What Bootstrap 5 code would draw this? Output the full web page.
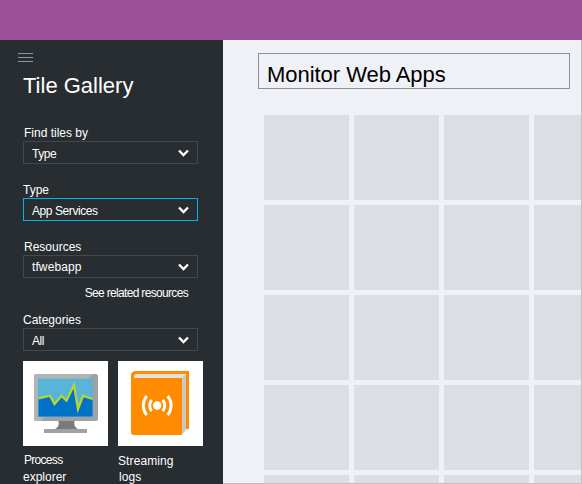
<!DOCTYPE html>
<html lang="en">
<head>
<meta charset="utf-8">
<meta name="viewport" content="width=device-width, initial-scale=1">
<title>Tile Gallery</title>
<link href="https://cdn.jsdelivr.net/npm/bootstrap@5.3.0/dist/css/bootstrap.min.css" rel="stylesheet">
<style>
body{font-family:"Liberation Sans",Arial,sans-serif;font-size:12px;line-height:16px;background:#f0f1f7}
.topbar{height:40px;background:#9b4f96}
.gallery{width:223px;background:#282d31;padding:13px 20px 0 23px}
.menu-btn{height:9px;width:15px;margin-left:-5px}
.gallery-title{font-size:22px;line-height:26px;margin:11px 0 26px}
.field{margin-bottom:18px;width:175px}
.field-label{height:16px}
.nudge{padding-left:1px}
.picker{height:23px;border:1px solid #43484c;border-radius:0;padding:4px 8px 0;color:#fff;font-size:12px;line-height:16px}
.picker.raised{padding-top:3px}
.picker.active-picker{border-color:#00b3ea}
.picker svg{margin-top:3px}
.picker.raised svg{margin-top:4px}
.tight{letter-spacing:-.42px}
.loose{letter-spacing:.1px}
.related{font-size:12px;letter-spacing:-.67px;margin:-11px 10px 11px 0;width:auto}
.tile-pic{width:85px;height:85px;background:#fff;margin-bottom:6px}
.squeeze{letter-spacing:-.7px}
.caption-low{padding-top:1px}
.board{border:solid #bfbfc4;border-width:0 1px 1px 0;padding:13px 0 0 35px}
.board-title{width:312px;height:36px;border:1px solid #8f9096;font-size:22px;line-height:26px;letter-spacing:-.04px;padding:8px 8px 0;color:#000;margin-bottom:26px}
.tiles{display:grid;grid-template-columns:repeat(4,85px);grid-auto-rows:85px;gap:5px;margin-left:6px}
.tiles div{background:#dddee3}
.shelf{gap:10px;padding-top:10px}
</style>
<script src="https://cdn.jsdelivr.net/npm/bootstrap@5.3.0/dist/js/bootstrap.bundle.min.js"></script>
</head>
<body class="vh-100 overflow-hidden d-flex flex-column">
<header class="topbar flex-shrink-0"></header>
<div class="d-flex flex-grow-1 overflow-hidden">
  <aside class="gallery flex-shrink-0 text-white overflow-hidden">
    <svg class="menu-btn d-block" viewBox="0 0 15 9" shape-rendering="crispEdges" fill="#929598"><path d="M0 0h15v1H0zM0 4h15v1H0zM0 8h15v1H0z"/></svg>
    <h1 class="gallery-title fw-normal">Tile Gallery</h1>
    <div class="field">
      <div class="field-label nudge">Find tiles by</div>
      <button type="button" class="picker btn w-100 d-flex justify-content-between align-items-start text-start"><span class="tight">Type</span><svg width="11" height="8" viewBox="0 0 11 8" fill="none" stroke="#fff" stroke-width="2.300"><path d="M1 1.500 5.500 6 10 1.500"/></svg></button>
    </div>
    <div class="field">
      <div class="field-label">Type</div>
      <button type="button" class="picker active-picker btn w-100 d-flex justify-content-between align-items-start text-start"><span class="tight">App Services</span><svg width="11" height="8" viewBox="0 0 11 8" fill="none" stroke="#fff" stroke-width="2.300"><path d="M1 1.500 5.500 6 10 1.500"/></svg></button>
    </div>
    <div class="field">
      <div class="field-label nudge">Resources</div>
      <button type="button" class="picker raised btn w-100 d-flex justify-content-between align-items-start text-start"><span class="loose">tfwebapp</span><svg width="11" height="8" viewBox="0 0 11 8" fill="none" stroke="#fff" stroke-width="2.300"><path d="M1 1.500 5.500 6 10 1.500"/></svg></button>
    </div>
    <div class="field mb-0"><div class="related text-end">See related resources</div></div>
    <div class="field mb-0">
      <div class="field-label">Categories</div>
      <button type="button" class="picker btn w-100 d-flex justify-content-between align-items-start text-start"><span class="tight">All</span><svg width="11" height="8" viewBox="0 0 11 8" fill="none" stroke="#fff" stroke-width="2.300"><path d="M1 1.500 5.500 6 10 1.500"/></svg></button>
    </div>
    <div class="d-flex shelf">
      <div>
        <svg class="tile-pic d-block" viewBox="0 0 85 85">
          <rect x="11" y="13" width="64" height="47" rx="2.500" fill="#a0a1a2"/>
          <path d="M13.500 13H70L18 60h-4.500a2.500 2.500 0 0 1-2.500-2.500v-42a2.500 2.500 0 0 1 2.500-2.500z" fill="#b2b3b4"/>
          <rect x="15" y="17.500" width="55" height="38.500" fill="#59b4d9"/>
          <path d="M15.500 37.500 27 35l4.500 8 7-8 4.500 4.500L51 24l4 24 5-13 9.500 3.500V55.500h-54z" fill="#0072c6"/>
          <path d="M15.500 37.300 27 34.700l4.500 8.300 7-8 5 4.500L51 24l4 24 5-13.200 9.800 3.200" fill="none" stroke="#b8d432" stroke-width="2.300"/>
          <circle cx="42.500" cy="16" r="1" fill="#b8d432"/>
          <path d="M35.500 60h16c-.8 4 .5 6.500 3.500 8H32c3-1.500 4.300-4 3.500-8z" fill="#7a7a7a"/>
          <path d="M21 68h43v4H21z" fill="#a0a1a2"/>
        </svg>
        <div class="squeeze nudge">Process</div>
        <div class="caption-low">explorer</div>
      </div>
      <div>
        <svg class="tile-pic d-block" viewBox="0 0 85 85">
          <path d="M18 10h53v58h-4V18H13v-4a5 5 0 0 1 5-4z" fill="#ff8c00"/>
          <path d="M19 13h49v56l-4 4.500V17H16a3.500 3.500 0 0 1 3-4z" fill="#c9c7c2"/>
          <path d="M19 13h49l-4 4H16a3.500 3.500 0 0 1 3-4z" fill="#e3e1dd"/>
          <path d="M13 14c0 2.500 1.500 3 4 3h47v57H16a3 3 0 0 1-3-3z" fill="#ff8c00"/>
          <circle cx="39.200" cy="44.500" r="4.200" fill="#fff"/>
          <path d="M33.700 39a8.500 8.500 0 0 0 0 11M44.700 39a8.500 8.500 0 0 1 0 11M28.700 35a15 15 0 0 0 0 19M49.700 35a15 15 0 0 1 0 19" fill="none" stroke="#fff" stroke-width="2.900"/>
        </svg>
        <div class="loose caption-low">Streaming</div>
        <div class="loose nudge">logs</div>
      </div>
    </div>
  </aside>
  <main class="board flex-grow-1 overflow-hidden">
    <div class="board-title">Monitor Web Apps</div>
    <div class="tiles">
      <div></div><div></div><div></div><div></div>
      <div></div><div></div><div></div><div></div>
      <div></div><div></div><div></div><div></div>
      <div></div><div></div><div></div><div></div>
      <div></div><div></div><div></div><div></div>
    </div>
  </main>
</div>
</body>
</html>
